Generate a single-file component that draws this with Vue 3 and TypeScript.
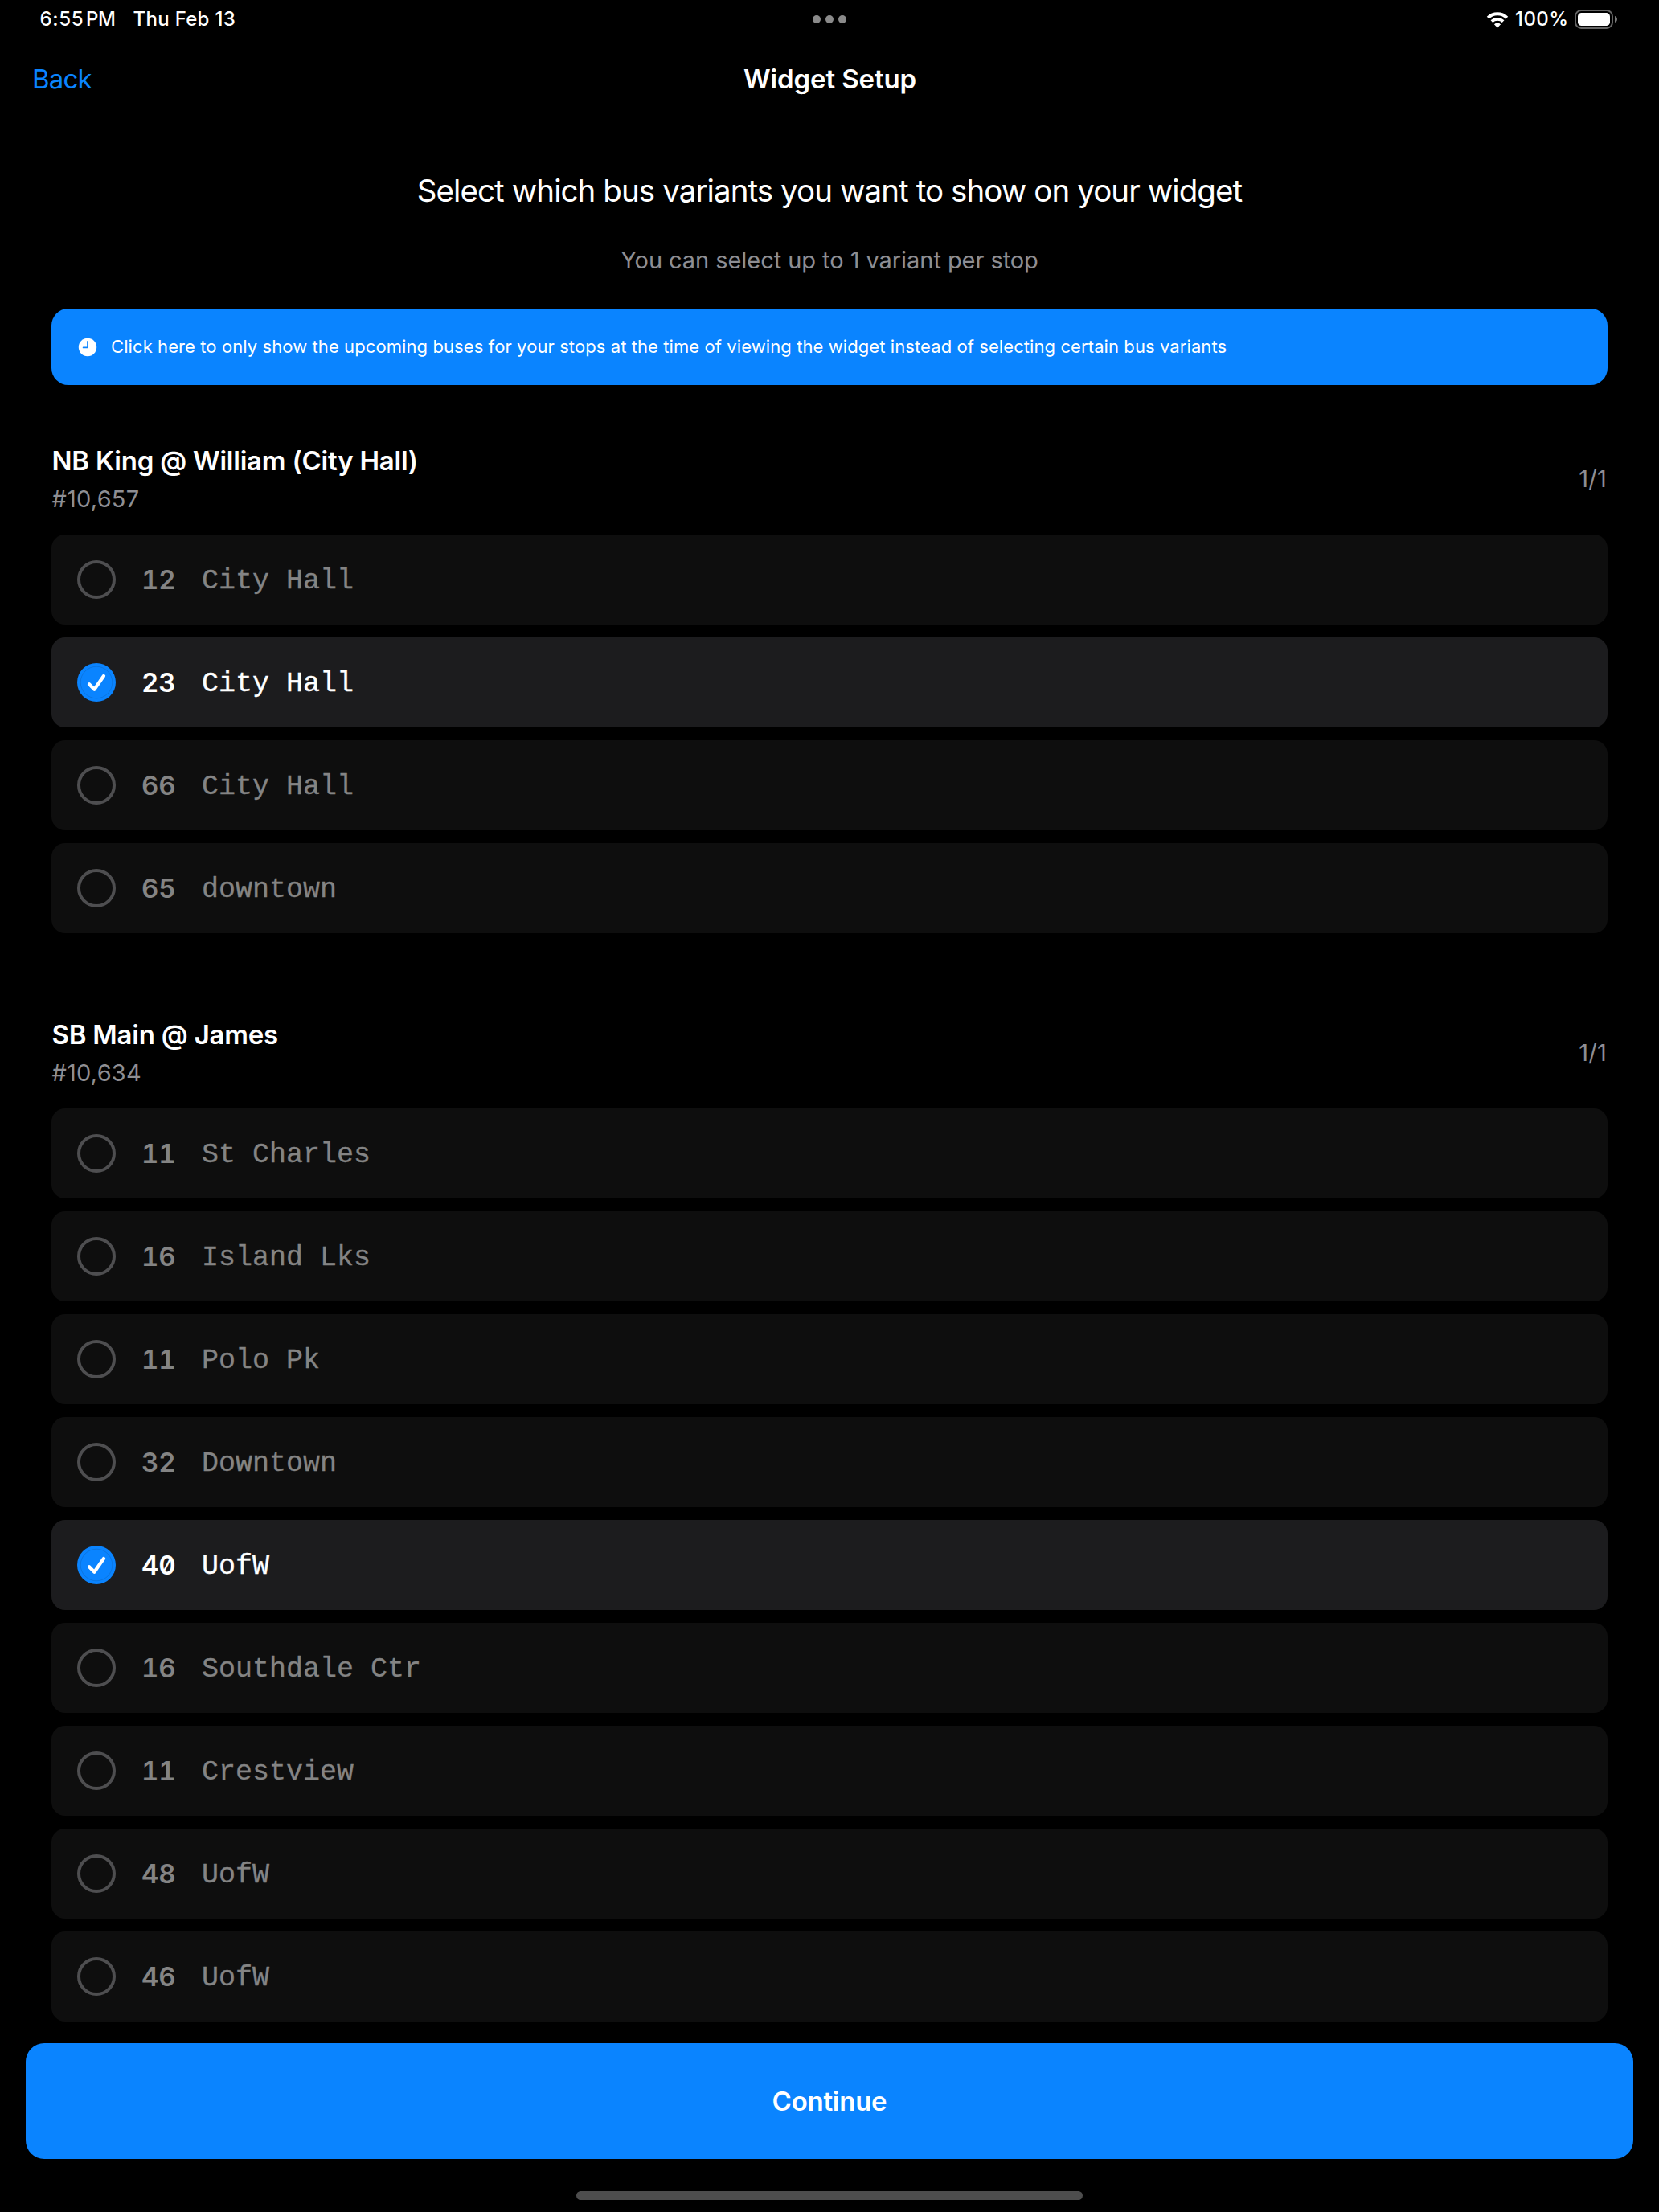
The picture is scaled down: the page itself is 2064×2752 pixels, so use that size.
<script setup lang="ts">
interface Variant {
  route: string
  name: string
  selected?: boolean
}
interface Stop {
  title: string
  code: string
  count: string
  variants: Variant[]
}

const stops: Stop[] = [
  {
    title: 'NB King @ William (City Hall)',
    code: '#10,657',
    count: '1/1',
    variants: [
      { route: '12', name: 'City Hall' },
      { route: '23', name: 'City Hall', selected: true },
      { route: '66', name: 'City Hall' },
      { route: '65', name: 'downtown' },
    ],
  },
  {
    title: 'SB Main @ James',
    code: '#10,634',
    count: '1/1',
    variants: [
      { route: '11', name: 'St Charles' },
      { route: '16', name: 'Island Lks' },
      { route: '11', name: 'Polo Pk' },
      { route: '32', name: 'Downtown' },
      { route: '40', name: 'UofW', selected: true },
      { route: '16', name: 'Southdale Ctr' },
      { route: '11', name: 'Crestview' },
      { route: '48', name: 'UofW' },
      { route: '46', name: 'UofW' },
    ],
  },
]
</script>

<template>
  <div class="screen">
    <header class="status">
      <div class="status-left">
        <span class="time"><span class="clock">6:55</span><span class="ampm">PM</span></span>
        <span class="date">Thu Feb 13</span>
      </div>
      <div class="dots"><i></i><i></i><i></i></div>
      <div class="status-right">
        <svg class="wifi" width="28" height="21" viewBox="0 0 28 21">
          <path d="M2.2 8.1 A16.8 16.8 0 0 1 25.8 8.1" fill="none" stroke="#fff" stroke-width="4" />
          <path d="M6.9 12.7 A10.2 10.2 0 0 1 21.1 12.7" fill="none" stroke="#fff" stroke-width="3.8" />
          <path d="M14 20.4 L9.9 16.3 A5.8 5.8 0 0 1 18.1 16.3 Z" fill="#fff" />
        </svg>
        <span class="percent">100%</span>
        <svg class="battery" width="54" height="24" viewBox="0 0 54 24">
          <rect x="1" y="1" width="46" height="22" rx="7.2" fill="none" stroke="#656565" stroke-width="2" />
          <rect x="4" y="4" width="40" height="16" rx="4.6" fill="#fff" />
          <path d="M50 8 C51.8 8.6 53 10.2 53 12 C53 13.8 51.8 15.4 50 16 Z" fill="#7b7b7b" />
        </svg>
      </div>
    </header>

    <nav class="nav">
      <a class="back">Back</a>
      <span class="nav-title">Widget Setup</span>
      <span></span>
    </nav>

    <main class="content">
      <h1 class="heading">Select which bus variants you want to show on your widget</h1>
      <p class="sub">You can select up to 1 variant per stop</p>

      <button class="banner">
        <svg width="24" height="24" viewBox="0 0 24 24">
          <circle cx="12" cy="12" r="11.2" fill="#fff" />
          <path d="M12 4.8 V12.4 H6.6" fill="none" stroke="#0a84ff" stroke-width="1.7" stroke-linecap="round" stroke-linejoin="round" />
        </svg>
        <span>Click here to only show the upcoming buses for your stops at the time of viewing the widget instead of selecting certain bus variants</span>
      </button>

      <section v-for="stop in stops" :key="stop.code" class="stop">
        <div class="stop-head">
          <div>
            <h2>{{ stop.title }}</h2>
            <p>{{ stop.code }}</p>
          </div>
          <span class="count">{{ stop.count }}</span>
        </div>
        <ul>
          <li v-for="(v, i) in stop.variants" :key="i" :class="{ selected: v.selected }">
            <svg class="mark" width="48" height="48" viewBox="0 0 48 48">
              <template v-if="v.selected">
                <circle cx="24" cy="24" r="24" fill="#0a84ff" />
                <circle cx="24" cy="24" r="19.8" fill="none" stroke="#0d6fd3" stroke-width="0.7" />
                <path d="M15 26.2 L21.4 32.8 L33 16" fill="none" stroke="#fff" stroke-width="4.2" stroke-linecap="round" stroke-linejoin="round" />
              </template>
              <circle v-else cx="24" cy="24" r="22" fill="none" stroke="#4e4e50" stroke-width="4" />
            </svg>
            <span class="route">{{ v.route }}</span>
            <span class="name">{{ v.name }}</span>
          </li>
        </ul>
      </section>
    </main>

    <footer class="footer">
      <button class="continue">Continue</button>
      <div class="home"></div>
    </footer>
  </div>
</template>

<style>
body {
  background: #000;
}
</style>

<style scoped>
.screen {
  width: 2064px;
  height: 2752px;
  display: flex;
  flex-direction: column;
  overflow: hidden;
  background: #000;
  color: #fff;
  font-family: Inter, 'Liberation Sans', sans-serif;
}
h1,
h2,
p,
ul {
  margin: 0;
  padding: 0;
  font-weight: 400;
  list-style: none;
}
button {
  border: 0;
  padding: 0;
  color: #fff;
  background: #0a84ff;
  font-family: inherit;
}

.status {
  height: 48px;
  flex: none;
  display: grid;
  grid-template-columns: 1fr auto 1fr;
  align-items: center;
  font-size: 24px;
  line-height: 46px;
  font-weight: 450;
  white-space: nowrap;
}
.status-left {
  display: flex;
  padding-left: 49.5px;
}
.time {
  display: flex;
  width: 116px;
  flex: none;
}
.clock {
  width: 57.5px;
  letter-spacing: 0.7px;
}
.ampm {
  letter-spacing: -0.5px;
}
.date {
  letter-spacing: 0.3px;
}
.dots {
  display: flex;
  gap: 6px;
}
.dots i {
  width: 10px;
  height: 10px;
  border-radius: 50%;
  background: #8a8a8a;
}
.status-right {
  display: flex;
  justify-content: flex-end;
  align-items: center;
  padding-right: 51px;
}
.percent {
  margin: 0 8px;
  width: 66px;
  letter-spacing: 0.45px;
}

.nav {
  height: 100px;
  flex: none;
  display: grid;
  grid-template-columns: 1fr auto 1fr;
  align-items: center;
  font-size: 33px;
  line-height: 42px;
}
.back {
  padding-left: 40px;
  color: #0a84ff;
  letter-spacing: -0.8px;
}
.nav-title {
  padding-left: 1px;
  font-weight: 600;
  letter-spacing: -0.12px;
}

.content {
  padding: 65px 64px 0;
  display: flex;
  flex-direction: column;
}
.heading {
  text-align: center;
  font-size: 38.5px;
  line-height: 48px;
  letter-spacing: -0.92px;
}
.sub {
  margin-top: 45px;
  text-align: center;
  color: #8e8e93;
  font-size: 29px;
  line-height: 36px;
  letter-spacing: -0.06px;
}
.banner {
  margin-top: 42px;
  height: 95px;
  display: flex;
  align-items: center;
  gap: 17px;
  padding-left: 33px;
  border-radius: 21px;
  font-size: 22px;
  letter-spacing: 0.086px;
  white-space: nowrap;
}
.banner span {
  padding-bottom: 2px;
}

.stop {
  margin-top: 73px;
}
.stop + .stop {
  margin-top: 105px;
}
.stop-head {
  display: flex;
  justify-content: space-between;
  align-items: center;
  margin-bottom: 26px;
}
.stop-head h2 {
  padding-left: 0.5px;
  font-size: 33px;
  line-height: 42px;
  font-weight: 600;
  letter-spacing: -0.22px;
}
.stop-head p {
  margin-top: 9px;
  padding-left: 0.5px;
  font-size: 29px;
  line-height: 36px;
  letter-spacing: 0.2px;
  color: #8e8e93;
}
.count {
  padding: 1px 1px 0 0;
  font-size: 29px;
  line-height: 36px;
  letter-spacing: 0.2px;
  color: #8e8e93;
}
.stop ul {
  display: flex;
  flex-direction: column;
  gap: 16px;
}
.stop li {
  height: 112px;
  display: flex;
  align-items: center;
  padding-left: 32px;
  border-radius: 17px;
  background: #0e0e0e;
  color: #848484;
}
.stop li.selected {
  background: #1c1c1e;
  color: #fff;
}
.mark {
  flex: none;
  margin-right: 32px;
}
.route {
  width: 75px;
  font-size: 33px;
  font-weight: 600;
  font-feature-settings: 'tnum', 'zero', 'ss02';
}
.name {
  padding-top: 3px;
  font-family: 'Liberation Mono', monospace;
  font-size: 35px;
  line-height: 40px;
  -webkit-text-stroke: 0.3px currentColor;
}

.footer {
  margin: 27px 32px 0;
  display: flex;
  flex-direction: column;
  align-items: center;
}
.continue {
  width: 100%;
  height: 144px;
  border-radius: 23px;
  font-size: 33px;
  font-weight: 600;
  letter-spacing: -0.25px;
}
.home {
  width: 630px;
  height: 11px;
  margin-top: 40px;
  border-radius: 6px;
  background: #4d4d4d;
}
</style>
